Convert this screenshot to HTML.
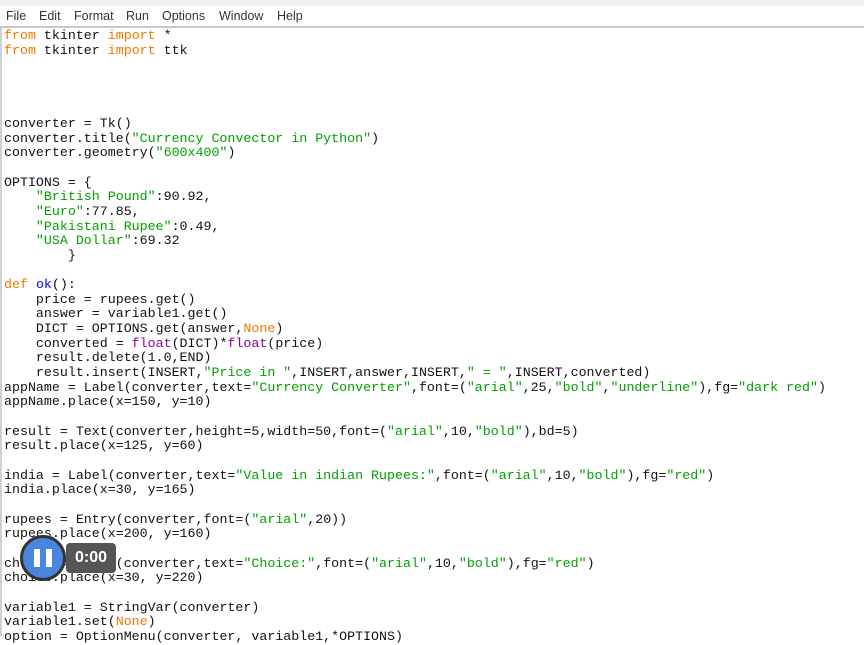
<!DOCTYPE html>
<html><head><meta charset="utf-8"><style>
body{margin:0;width:864px;height:636px;overflow:hidden;background:#fff;position:relative;font-family:"Liberation Sans",sans-serif}
.top{position:absolute;left:0;top:0;width:864px;height:6px;background:#f0f0f0}
.menu{position:absolute;left:0;top:6px;width:864px;height:20px;background:#fff;font-size:12.5px;color:#333}
.menu span{position:absolute;top:3px}
.bar{position:absolute;left:0;top:26px;width:864px;height:2px;background:#c8c8c8}
.lb{position:absolute;left:0;top:28px;width:2px;height:608px;background:#d0d0d0}
pre{position:absolute;left:4px;top:29px;margin:0;font-family:"Liberation Mono",monospace;font-size:13.3px;line-height:14.65px;color:#111}
.k{color:#f07800}.s{color:#00a000}.b{color:#900090}.d{color:#0000ff}
.circ{position:absolute;left:20px;top:535px;width:40px;height:40px;border-radius:50%;background:#4a86e0;border:3px solid #333}
.circ i{position:absolute;top:11px;width:6px;height:18px;background:#fff}
.tm{position:absolute;left:66px;top:543px;width:50px;height:30px;border-radius:4px;background:#555;color:#fff;font-weight:bold;font-size:16px;line-height:30px;text-align:center}
</style></head><body>
<div class="top"></div>
<div class="menu"><span style="left:6px">File</span><span style="left:39px">Edit</span><span style="left:74px">Format</span><span style="left:126px">Run</span><span style="left:162px">Options</span><span style="left:219px">Window</span><span style="left:277px">Help</span></div>
<div class="bar"></div><div class="lb"></div>
<pre><span class="k">from</span> tkinter <span class="k">import</span> *
<span class="k">from</span> tkinter <span class="k">import</span> ttk




converter = Tk()
converter.title(<span class="s">"Currency Convector in Python"</span>)
converter.geometry(<span class="s">"600x400"</span>)

OPTIONS = {
    <span class="s">"British Pound"</span>:90.92,
    <span class="s">"Euro"</span>:77.85,
    <span class="s">"Pakistani Rupee"</span>:0.49,
    <span class="s">"USA Dollar"</span>:69.32
        }

<span class="k">def</span> <span class="d">ok</span>():
    price = rupees.get()
    answer = variable1.get()
    DICT = OPTIONS.get(answer,<span class="k">None</span>)
    converted = <span class="b">float</span>(DICT)*<span class="b">float</span>(price)
    result.delete(1.0,END)
    result.insert(INSERT,<span class="s">"Price in "</span>,INSERT,answer,INSERT,<span class="s">" = "</span>,INSERT,converted)
appName = Label(converter,text=<span class="s">"Currency Converter"</span>,font=(<span class="s">"arial"</span>,25,<span class="s">"bold"</span>,<span class="s">"underline"</span>),fg=<span class="s">"dark red"</span>)
appName.place(x=150, y=10)

result = Text(converter,height=5,width=50,font=(<span class="s">"arial"</span>,10,<span class="s">"bold"</span>),bd=5)
result.place(x=125, y=60)

india = Label(converter,text=<span class="s">"Value in indian Rupees:"</span>,font=(<span class="s">"arial"</span>,10,<span class="s">"bold"</span>),fg=<span class="s">"red"</span>)
india.place(x=30, y=165)

rupees = Entry(converter,font=(<span class="s">"arial"</span>,20))
rupees.place(x=200, y=160)

choice = Label(converter,text=<span class="s">"Choice:"</span>,font=(<span class="s">"arial"</span>,10,<span class="s">"bold"</span>),fg=<span class="s">"red"</span>)
choice.place(x=30, y=220)

variable1 = StringVar(converter)
variable1.set(<span class="k">None</span>)
option = OptionMenu(converter, variable1,*OPTIONS)</pre>
<div class="circ"><i style="left:11px"></i><i style="left:23px"></i></div>
<div class="tm">0:00</div>
</body></html>
